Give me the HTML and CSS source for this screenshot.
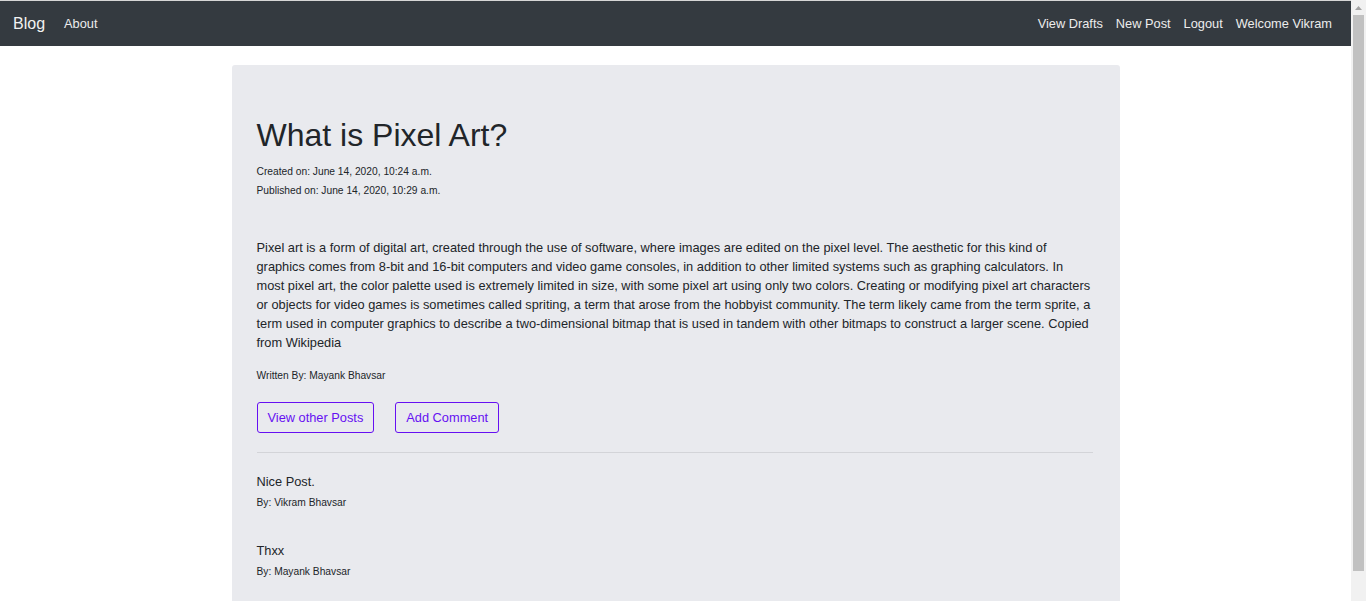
FILE: index.html
```html
<!DOCTYPE html>
<html lang="en">
<head>
<meta charset="utf-8">
<title>What is Pixel Art?</title>
<link rel="stylesheet" href="styles.css">
</head>
<body>
<div class="page">
  <nav class="navbar">
    <div class="nav-left">
      <a class="brand" href="#">Blog</a>
      <a class="nav-link" href="#">About</a>
    </div>
    <div class="nav-right">
      <a class="nav-link" href="#">View Drafts</a>
      <a class="nav-link" href="#">New Post</a>
      <a class="nav-link" href="#">Logout</a>
      <span class="nav-link">Welcome Vikram</span>
    </div>
  </nav>
  <main class="card">
    <h1 class="title">What is Pixel Art?</h1>
    <p class="meta">Created on: June 14, 2020, 10:24 a.m.</p>
    <p class="meta">Published on: June 14, 2020, 10:29 a.m.</p>
    <p class="body-text">Pixel art is a form of digital art, created through the use of software, where images are edited on the pixel level. The aesthetic for this kind of graphics comes from 8-bit and 16-bit computers and video game consoles, in addition to other limited systems such as graphing calculators. In most pixel art, the color palette used is extremely limited in size, with some pixel art using only two colors. Creating or modifying pixel art characters or objects for video games is sometimes called spriting, a term that arose from the hobbyist community. The term likely came from the term sprite, a term used in computer graphics to describe a two-dimensional bitmap that is used in tandem with other bitmaps to construct a larger scene. Copied from Wikipedia</p>
    <p class="meta author">Written By: Mayank Bhavsar</p>
    <div class="actions">
      <a class="btn" href="#">View other Posts</a>
      <a class="btn" href="#">Add Comment</a>
    </div>
    <hr class="divider">
    <div class="comment">
      <p class="comment-text">Nice Post.</p>
      <p class="meta">By: Vikram Bhavsar</p>
    </div>
    <div class="comment">
      <p class="comment-text">Thxx</p>
      <p class="meta">By: Mayank Bhavsar</p>
    </div>
  </main>
</div>
<div class="scrollbar" aria-hidden="true">
  <div class="scroll-arrow">
    <svg width="15" height="15" viewBox="0 0 15 15"><polygon points="4,10 11,10 7.5,6" fill="#a3a3a3"/></svg>
  </div>
  <div class="scroll-thumb"></div>
</div>
</body>
</html>
```

FILE: styles.css
```css
html, body {
  margin: 0;
  padding: 0;
}
body {
  font-family: "Liberation Sans", Arial, sans-serif;
  font-size: 12.8px;
  line-height: 19px;
  color: #212529;
  background: #fff;
  padding-right: 15px;
}
.scrollbar {
  position: fixed;
  top: 0;
  right: 0;
  bottom: 0;
  width: 15px;
  background: #f1f1f1;
  display: flex;
  flex-direction: column;
}
.scroll-arrow {
  height: 15px;
  flex: none;
}
.scroll-arrow svg {
  display: block;
}
.scroll-thumb {
  height: 556px;
  margin: 0 2px;
  background: #c1c1c1;
}
.navbar {
  display: flex;
  justify-content: space-between;
  align-items: center;
  height: 45px;
  background: #343a40;
  border-top: 1px solid #d6d6d6;
  padding: 0 19px 0 13px;
}
.nav-left, .nav-right {
  display: flex;
  align-items: center;
}
.nav-left { gap: 19px; }
.nav-right { gap: 13px; }
.brand {
  font-size: 16px;
  color: #f2f2f2;
  text-decoration: none;
}
.nav-link {
  color: #ececec;
  text-decoration: none;
  font-size: 12.8px;
}
.card {
  width: 836px;
  margin: 19px auto 8px;
  background: #e9eaee;
  border-radius: 3px;
  padding: 25px 27px 48px 25px;
}
.title {
  font-size: 32px;
  font-weight: 400;
  line-height: 38px;
  margin: 26px 0 8px;
}
.meta {
  font-size: 10.24px;
  line-height: 19px;
  margin: 0;
}
.body-text {
  margin: 38px 0 14px;
}
.author {
  margin-bottom: 17px;
}
.actions {
  display: flex;
  gap: 21px;
}
.btn {
  display: inline-block;
  color: #6610f2;
  border: 1px solid #6610f2;
  border-radius: 3px;
  padding: 6px 10px;
  line-height: 17px;
  text-decoration: none;
}
.divider {
  border: 0;
  border-top: 1px solid #d3d4d8;
  margin: 19px 0 19px;
}
.comment + .comment {
  margin-top: 29px;
}
.comment-text {
  margin: 0 0 2px;
}
```
